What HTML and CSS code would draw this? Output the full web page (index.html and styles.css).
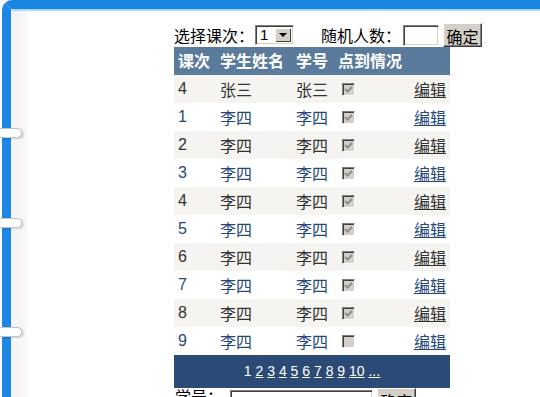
FILE: index.html
```html
<!DOCTYPE html>
<html lang="zh">
<head>
    <meta charset="UTF-8">
    <title>点到管理</title>
    <link rel="stylesheet" href="styles.css">
</head>
<body>
    <span class="ring ring-1"></span>
    <span class="ring ring-2"></span>
    <span class="ring ring-3"></span>

    <div class="binder">
        <div class="page">
            <!-- 查询条件 -->
            <div class="toolbar">
                <span class="label">选择课次：</span>
                <span class="select"><span class="select-value">1</span><span class="select-btn"><i class="arrow"></i></span></span>
                <span class="label label-gap">随机人数：</span>
                <input type="text" class="textbox">
                <button class="btn">确定</button>
            </div>

            <table class="roll">
                <colgroup>
                    <col style="width: 42px">
                    <col style="width: 76px">
                    <col style="width: 42px">
                    <col>
                    <col style="width: 44px">
                </colgroup>
                <thead>
                    <tr>
                        <th>课次</th>
                        <th>学生姓名</th>
                        <th>学号</th>
                        <th colspan="2">点到情况</th>
                    </tr>
                </thead>
                <tbody id="rollBody"></tbody>
            </table>

            <div class="pager">
                1 <a href="#">2</a> <a href="#">3</a> <a href="#">4</a> <a href="#">5</a> <a href="#">6</a> <a href="#">7</a> <a href="#">8</a> <a href="#">9</a> <a href="#">10</a> <a href="#">...</a>
            </div>

            <div class="search">
                <span class="label">学号：</span>
                <input type="text" class="textbox textbox-wide">
                <button class="btn">确定</button>
            </div>
        </div>
    </div>

    <script>
        const rows = [
            ['4', '张三', '张三', true],
            ['1', '李四', '李四', true],
            ['2', '李四', '李四', true],
            ['3', '李四', '李四', true],
            ['4', '李四', '李四', true],
            ['5', '李四', '李四', true],
            ['6', '李四', '李四', true],
            ['7', '李四', '李四', true],
            ['8', '李四', '李四', true],
            ['9', '李四', '李四', false]
        ];
        const body = document.getElementById('rollBody');
        rows.forEach(function(r) {
            const tr = document.createElement('tr');
            const mark = r[3]
                ? '<svg width="9" height="9" viewBox="0 0 9 9"><path d="M1 4 L3.5 6.5 L8 2" fill="none" stroke="#8c8c8c" stroke-width="2"/></svg>'
                : '';
            tr.innerHTML =
                '<td>' + r[0] + '</td>' +
                '<td>' + r[1] + '</td>' +
                '<td>' + r[2] + '</td>' +
                '<td><span class="check">' + mark + '</span></td>' +
                '<td class="edit"><a href="#">编辑</a></td>';
            body.appendChild(tr);
        });
    </script>
</body>
</html>
```

FILE: styles.css
```css
html, body {
    margin: 0;
    height: 100%;
    overflow: hidden;
    background: #fff;
    font-family: "Liberation Sans", "Noto Sans CJK SC", sans-serif;
    font-size: 16px;
    color: #000;
}

/* 蓝色外框 */
.binder {
    height: 100%;
    margin-left: 2px;
    border-top: 9px solid #1a86e4;
    border-left: 9px solid #1d87e5;
    border-top-left-radius: 10px;
    box-sizing: border-box;
}

.page {
    height: 100%;
    border-top: 2px solid #a3dcf7;
    border-top-left-radius: 3px;
    padding: 12px 0 0 163px;
    box-sizing: border-box;
    background: linear-gradient(to right, #f4f4f4 0, #f7f7f7 14px, #fff 18px);
}

/* 装订环 */
.ring {
    position: absolute;
    left: 0;
    width: 21px;
    height: 8px;
    background: #fff;
    border: 1px solid #c4c4c4;
    border-left: none;
    border-radius: 0 6px 6px 0;
    box-shadow: 2px 1px 2px rgba(0, 0, 0, 0.15);
    z-index: 2;
}

.ring-1 { top: 128px; }
.ring-2 { top: 218px; }
.ring-3 { top: 327px; }

/* 工具栏 */
.toolbar {
    display: flex;
    align-items: flex-end;
    height: 24px;
}

.label {
    line-height: 18px;
    padding-bottom: 1px;
}

.label-gap {
    margin-left: 27px;
}

.select {
    display: flex;
    width: 39px;
    height: 20px;
    margin: 0 0 2px 1px;
    box-sizing: border-box;
    border-top: 1px solid #808080;
    border-left: 1px solid #808080;
    border-right: 1px solid #fff;
    border-bottom: 1px solid #fff;
    box-shadow: inset 1px 1px #404040, inset -1px -1px #d4d0c8;
    background: #fff;
}

.select-value {
    flex: 1;
    padding-left: 4px;
    font-size: 15px;
    line-height: 18px;
}

.select-btn {
    width: 16px;
    margin: 2px 2px 2px 0;
    background: #d4d0c8;
    box-shadow: inset 1px 1px #fff, inset -1px -1px #404040;
    display: flex;
    align-items: center;
    justify-content: center;
}

.arrow {
    border-left: 4px solid transparent;
    border-right: 4px solid transparent;
    border-top: 4px solid #000;
}

.textbox {
    width: 36px;
    height: 21px;
    margin: 0 0 1px 2px;
    padding: 0;
    box-sizing: border-box;
    border-top: 1px solid #808080;
    border-left: 1px solid #808080;
    border-right: 1px solid #fff;
    border-bottom: 1px solid #fff;
    box-shadow: inset 1px 1px #404040, inset -1px -1px #d4d0c8;
    outline: none;
}

.btn {
    width: 39px;
    height: 24px;
    margin-left: 4px;
    padding: 0;
    font-family: inherit;
    font-size: 16px;
    background: #d4d0c8;
    border: 1px solid;
    border-color: #fff #404040 #404040 #fff;
    box-shadow: inset -1px -1px #808080;
    color: #000;
}

/* 点到表格 */
.roll {
    width: 276px;
    border-collapse: collapse;
    table-layout: fixed;
}

.roll th,
.roll td {
    height: 28px;
    padding: 0 0 0 4px;
    text-align: left;
    white-space: nowrap;
}

.roll th {
    height: 26px;
    background: #5b7b9d;
    color: #fff;
    font-weight: bold;
    padding-bottom: 2px;
}

.roll tbody tr:nth-child(odd) {
    background: #f5f4f0;
    color: #333;
}

.roll tbody tr:nth-child(even) {
    background: #fff;
    color: #284878;
}

.roll a {
    color: inherit;
}

.roll td.edit {
    text-align: right;
    padding: 0 4px 0 0;
}

.check {
    display: flex;
    align-items: center;
    justify-content: center;
    width: 13px;
    height: 13px;
    margin-left: 4px;
    box-sizing: border-box;
    background: #d4d0c8;
    border-top: 1px solid #808080;
    border-left: 1px solid #808080;
    border-right: 1px solid #fff;
    border-bottom: 1px solid #fff;
    box-shadow: inset 1px 1px #404040;
}

/* 分页 */
.pager {
    width: 276px;
    height: 33px;
    line-height: 33px;
    background: #2b4a76;
    color: #fff;
    text-align: center;
    font-size: 14px;
}

.pager a {
    color: #fff;
}

/* 按学号查询 */
.search {
    display: flex;
    align-items: flex-start;
    padding-left: 1px;
}

.search .label {
    padding-top: 1px;
}

.textbox-wide {
    width: 143px;
    margin: 2px 0 0 7px;
}
```
